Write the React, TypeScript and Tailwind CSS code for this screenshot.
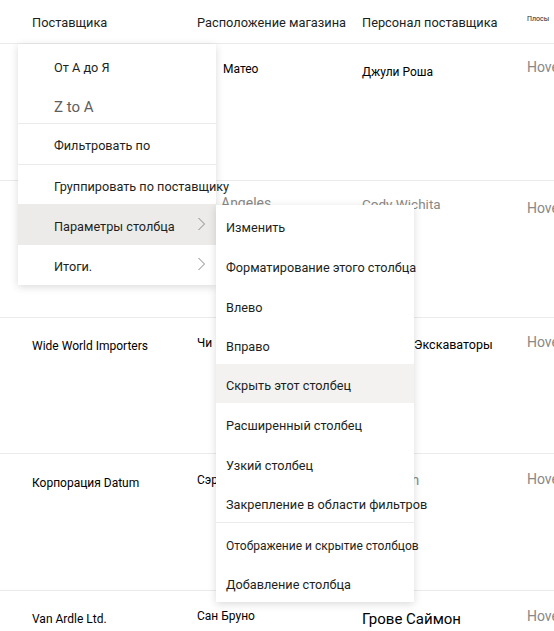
import React from 'react';

const font = { fontFamily: 'Roboto, "Noto Sans", sans-serif' };

const Chevron = () => (
  <svg width="9" height="14" viewBox="0 0 9 14" fill="none" aria-hidden="true">
    <path d="M1.5 1l6 6-6 6" stroke="#8a8886" strokeWidth="1" />
  </svg>
);

const MenuItem = ({
  children,
  h,
  active,
  chevron,
  className = 'text-[12.7px] text-[#201f1e]',
}: {
  children: React.ReactNode;
  h: string;
  active?: boolean;
  chevron?: boolean;
  className?: string;
}) => (
  <div
    className={`flex items-center justify-between pt-[4px] pl-[36px] pr-[10px] whitespace-nowrap ${h} ${
      active ? 'bg-[#edebe9]' : ''
    } ${className}`}
  >
    <span>{children}</span>
    {chevron && (
      <span className="-mt-[6px]">
        <Chevron />
      </span>
    )}
  </div>
);

const SubItem = ({
  children,
  h,
  active,
  className = 'text-[12.7px]',
}: {
  children: React.ReactNode;
  h: string;
  active?: boolean;
  className?: string;
}) => (
  <div
    className={`flex items-center pt-[5px] pl-[10px] whitespace-nowrap text-[#201f1e] ${h} ${
      active ? 'bg-[#f3f2f1]' : ''
    } ${className}`}
  >
    {children}
  </div>
);

const Hove = ({ mt }: { mt: string }) => (
  <span className={`${mt} text-[14px] text-[#8a8886]`}>Hove</span>
);

export default function App() {
  return (
    <div className="relative w-[554px] h-[631px] overflow-hidden bg-white" style={font}>
      {/* header */}
      <div className="grid grid-cols-[165px_165px_165px_1fr] pl-[32px] pt-[3px] h-[44px] items-center border-b border-[#edebe9] text-[12.8px] text-[#201f1e] whitespace-nowrap">
        <span>Поставщика</span>
        <span>Расположение магазина</span>
        <span>Персонал поставщика</span>
        <span className="text-[7px] self-start mt-[11px]">Плосы</span>
      </div>

      {/* row 1 */}
      <div className="grid grid-cols-[165px_165px_165px_1fr] pl-[32px] items-start whitespace-nowrap h-[137px] border-b border-[#edebe9]">
        <span className="mt-[18px] text-[12px] text-black">Contoso</span>
        <span className="mt-[16px] text-[12px] text-black">
          <span className="inline-block w-[19px] mr-[7px] overflow-hidden align-top">Сан</span>Матео
        </span>
        <span className="mt-[19px] text-[12px] text-black">Джули Роша</span>
        <Hove mt="mt-[13px]" />
      </div>

      {/* row 2 */}
      <div className="grid grid-cols-[165px_165px_165px_1fr] pl-[32px] items-start whitespace-nowrap h-[137px] border-b border-[#edebe9]">
        <span className="mt-[12px] text-[12px] text-black">Fabrikam</span>
        <span className="mt-[12px] text-[14px] text-[#8a8886]">
          <span className="inline-block w-[18px] mr-[6px] overflow-hidden align-top">Los</span>Angeles
        </span>
        <span className="mt-[13px] text-[13.5px] text-[#8a8886]">Cody Wichita</span>
        <Hove mt="mt-[17px]" />
      </div>

      {/* row 3 */}
      <div className="grid grid-cols-[165px_165px_165px_1fr] pl-[32px] items-start whitespace-nowrap h-[136px] border-b border-[#edebe9]">
        <span className="mt-[19px] text-[12px] text-black">Wide World Importers</span>
        <span className="mt-[16px] text-[12px] text-black">
          Чи<span className="ml-[6px]">каго</span>
        </span>
        <span className="mt-[18px] text-[12.5px] text-black">
          <span className="inline-block w-[52px] overflow-hidden align-top">Лиза</span>Экскаваторы
        </span>
        <Hove mt="mt-[14px]" />
      </div>

      {/* row 4 */}
      <div className="grid grid-cols-[165px_165px_165px_1fr] pl-[32px] items-start whitespace-nowrap h-[137px] border-b border-[#edebe9]">
        <span className="mt-[20px] text-[12px] text-black">Корпорация Datum</span>
        <span className="mt-[17px] text-[12px] text-black">
          Сэр<span className="ml-[5px]">Маммиш</span>
        </span>
        <span className="mt-[16px] text-[14px] text-[#8a8886]">
          <span className="inline-block w-[21px] overflow-hidden align-top">Bill</span>Smith
        </span>
        <Hove mt="mt-[15px]" />
      </div>

      {/* row 5 */}
      <div className="grid grid-cols-[165px_165px_165px_1fr] pl-[32px] items-start whitespace-nowrap h-[60px]">
        <span className="mt-[19px] text-[12px] text-black">Van Ardle Ltd.</span>
        <span className="mt-[16px] text-[12px] text-black">Сан Бруно</span>
        <span className="mt-[17px] text-[15px] text-black">Грове Саймон</span>
        <Hove mt="mt-[15px]" />
      </div>

      {/* main context menu */}
      <div className="absolute left-[18px] top-[44px] w-[198px] bg-white shadow-[0_2px_8px_rgba(0,0,0,0.15)]">
        <MenuItem h="h-[43px]">От А до Я</MenuItem>
        <MenuItem h="h-[36px]" className="text-[15px] text-[#605e5c]">
          Z to A
        </MenuItem>
        <div className="h-px bg-[#edebe9]" />
        <MenuItem h="h-[40px]">Фильтровать по</MenuItem>
        <div className="h-px bg-[#edebe9]" />
        <MenuItem h="h-[39px]">Группировать по поставщику</MenuItem>
        <MenuItem h="h-[41px]" active chevron>
          Параметры столбца
        </MenuItem>
        <MenuItem h="h-[40px]" chevron>
          Итоги.
        </MenuItem>
      </div>

      {/* submenu */}
      <div className="absolute left-[216px] top-[205px] w-[198px] bg-white shadow-[0_2px_8px_rgba(0,0,0,0.15)]">
        <SubItem h="h-[40px]">Изменить</SubItem>
        <SubItem h="h-[40px]">Форматирование этого столбца</SubItem>
        <SubItem h="h-[40px]">Влево</SubItem>
        <SubItem h="h-[39px]">Вправо</SubItem>
        <SubItem h="h-[39px]" active>
          Скрыть этот столбец
        </SubItem>
        <SubItem h="h-[40px]">Расширенный столбец</SubItem>
        <SubItem h="h-[40px]">Узкий столбец</SubItem>
        <SubItem h="h-[39px]">Закрепление в области фильтров</SubItem>
        <div className="h-px bg-[#edebe9]" />
        <SubItem h="h-[40px]" className="text-[12px]">
          Отображение и скрытие столбцов
        </SubItem>
        <SubItem h="h-[39px]">Добавление столбца</SubItem>
      </div>
    </div>
  );
}
